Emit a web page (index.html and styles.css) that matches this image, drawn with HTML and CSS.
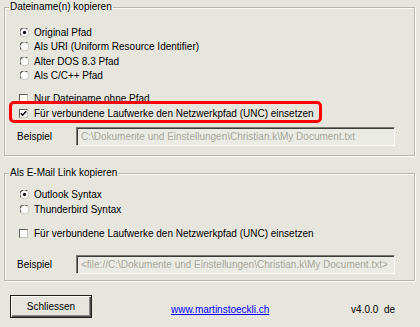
FILE: index.html
```html
<!DOCTYPE html>
<html lang="de">
<head>
<meta charset="utf-8">
<title>Dateiname kopieren</title>
<link rel="stylesheet" href="styles.css">
</head>
<body>
<div class="dialog">
  <fieldset class="group group-file">
    <legend>Dateiname(n) kopieren</legend>
    <div class="radios">
      <div class="row"><span class="radio on"><svg viewBox="0 0 9 9" width="9" height="9"><circle cx="4.5" cy="4.5" r="4" fill="#fff"/><path d="M1.2 7.3A4 4 0 0 1 7.3 1.2" fill="none" stroke="#55554f" stroke-width="1.2"/><path d="M1.6 7.6A4 4 0 0 0 7.6 1.6" fill="none" stroke="#bcbcb4" stroke-width="1"/><circle cx="4.5" cy="4.5" r="1.7" fill="#111"/></svg></span><span>Original Pfad</span></div>
      <div class="row"><span class="radio"><svg viewBox="0 0 9 9" width="9" height="9"><circle cx="4.5" cy="4.5" r="4" fill="#fff"/><path d="M1.2 7.3A4 4 0 0 1 7.3 1.2" fill="none" stroke="#55554f" stroke-width="1.2"/><path d="M1.6 7.6A4 4 0 0 0 7.6 1.6" fill="none" stroke="#bcbcb4" stroke-width="1"/></svg></span><span>Als URI (Uniform Resource Identifier)</span></div>
      <div class="row"><span class="radio"><svg viewBox="0 0 9 9" width="9" height="9"><circle cx="4.5" cy="4.5" r="4" fill="#fff"/><path d="M1.2 7.3A4 4 0 0 1 7.3 1.2" fill="none" stroke="#55554f" stroke-width="1.2"/><path d="M1.6 7.6A4 4 0 0 0 7.6 1.6" fill="none" stroke="#bcbcb4" stroke-width="1"/></svg></span><span>Alter DOS 8.3 Pfad</span></div>
      <div class="row"><span class="radio"><svg viewBox="0 0 9 9" width="9" height="9"><circle cx="4.5" cy="4.5" r="4" fill="#fff"/><path d="M1.2 7.3A4 4 0 0 1 7.3 1.2" fill="none" stroke="#55554f" stroke-width="1.2"/><path d="M1.6 7.6A4 4 0 0 0 7.6 1.6" fill="none" stroke="#bcbcb4" stroke-width="1"/></svg></span><span>Als C/C++ Pfad</span></div>
    </div>
    <div class="row check-row check-first"><span class="check"></span><span>Nur Dateiname ohne Pfad</span></div>
    <div class="row check-row marked"><span class="check"><svg viewBox="0 0 7 7" width="7" height="7"><path d="M0.8 3.2L2.6 5.2L6.2 1.2" fill="none" stroke="#000" stroke-width="1.5"/></svg></span><span>Für verbundene Laufwerke den Netzwerkpfad (UNC) einsetzen</span></div>
    <div class="example example-file">
      <span class="label">Beispiel</span>
      <div class="field">C:\Dokumente und Einstellungen\Christian.k\My Document.txt</div>
    </div>
  </fieldset>

  <fieldset class="group group-mail">
    <legend>Als E-Mail Link kopieren</legend>
    <div class="radios radios-mail">
      <div class="row"><span class="radio on"><svg viewBox="0 0 9 9" width="9" height="9"><circle cx="4.5" cy="4.5" r="4" fill="#fff"/><path d="M1.2 7.3A4 4 0 0 1 7.3 1.2" fill="none" stroke="#55554f" stroke-width="1.2"/><path d="M1.6 7.6A4 4 0 0 0 7.6 1.6" fill="none" stroke="#bcbcb4" stroke-width="1"/><circle cx="4.5" cy="4.5" r="1.7" fill="#111"/></svg></span><span>Outlook Syntax</span></div>
      <div class="row"><span class="radio"><svg viewBox="0 0 9 9" width="9" height="9"><circle cx="4.5" cy="4.5" r="4" fill="#fff"/><path d="M1.2 7.3A4 4 0 0 1 7.3 1.2" fill="none" stroke="#55554f" stroke-width="1.2"/><path d="M1.6 7.6A4 4 0 0 0 7.6 1.6" fill="none" stroke="#bcbcb4" stroke-width="1"/></svg></span><span>Thunderbird Syntax</span></div>
    </div>
    <div class="row check-row check-mail"><span class="check"></span><span>Für verbundene Laufwerke den Netzwerkpfad (UNC) einsetzen</span></div>
    <div class="example example-mail">
      <span class="label">Beispiel</span>
      <div class="field">&lt;file://C:\Dokumente und Einstellungen\Christian.k\My Document.txt&gt;</div>
    </div>
  </fieldset>

  <div class="footer">
    <button class="btn" type="button">Schliessen</button>
    <a class="link" href="#">www.martinstoeckli.ch</a>
    <span class="version">v4.0.0&nbsp; de</span>
  </div>
</div>
</body>
</html>
```

FILE: styles.css
```css
html, body {
  margin: 0;
  padding: 0;
  background: #e6e6de;
}

.dialog {
  width: 420px;
  height: 327px;
  box-sizing: border-box;
  padding: 1px 5px 0 4px;
  font-family: "Liberation Sans", Arial, sans-serif;
  font-size: 10px;
  color: #000;
  display: flex;
  flex-direction: column;
}

.group {
  margin: 0;
  padding: 0;
  border: 1px solid #b8b8aa;
  box-shadow: 1px 1px 0 #fbfbf8, inset 1px 1px 0 #fbfbf8;
  min-width: 0;
}

.group legend {
  padding: 0 1px;
  margin-left: 4px;
  line-height: 12px;
  height: 12px;
}

.group-file {
  height: 155px;
  box-sizing: border-box;
}

.group-mail {
  margin-top: 11px;
  height: 114px;
  box-sizing: border-box;
}

.radios {
  margin-top: 12px;
  padding-left: 15px;
}

.radios .row {
  height: 14.5px;
}

.radios-mail {
  margin-top: 8px;
}

.radios-mail .row {
  height: 15px;
}

.row {
  display: flex;
  align-items: center;
  gap: 5px;
  white-space: nowrap;
  height: 14px;
}

.radio {
  width: 9px;
  height: 9px;
  display: flex;
  flex: none;
}

.check-row {
  padding-left: 14px;
}

.check {
  width: 9px;
  height: 9px;
  box-sizing: border-box;
  background: #fff;
  border-top: 1px solid #5e5e58;
  border-left: 1px solid #5e5e58;
  border-right: 1px solid #c4c4bc;
  border-bottom: 1px solid #c4c4bc;
  display: flex;
  align-items: center;
  justify-content: center;
  flex: none;
  margin-right: 1px;
}

.check-first {
  margin-top: 8px;
}

.marked {
  margin-top: 1px;
  position: relative;
}

.marked::before {
  content: "";
  position: absolute;
  left: 4px;
  top: -5px;
  width: 313px;
  height: 22px;
  box-sizing: border-box;
  border: 3px solid #ff0000;
  border-radius: 5px;
  pointer-events: none;
}

.check-mail {
  margin-top: 9px;
}

.example {
  display: flex;
  align-items: center;
  padding-left: 12px;
}

.example-file {
  margin-top: 7px;
}

.example-mail {
  margin-top: 15px;
}

.label {
  width: 59px;
  flex: none;
}

.field {
  width: 319px;
  height: 19px;
  box-sizing: border-box;
  border-top: 1px solid #7a7a72;
  border-left: 1px solid #7a7a72;
  border-right: 1px solid #fbfbf8;
  border-bottom: 1px solid #fbfbf8;
  box-shadow: inset 1px 1px 0 #3c3c38;
  background: #ebebe5;
  color: #a7a79c;
  padding: 0 0 0 4px;
  line-height: 17px;
  white-space: nowrap;
  overflow: hidden;
}

.footer {
  display: flex;
  align-items: center;
  margin-top: 14px;
  padding-left: 6px;
}

.btn {
  width: 82px;
  height: 23px;
  margin: 0;
  padding: 0;
  font: inherit;
  color: #000;
  background: #e6e6de;
  border: 1px solid #1e1e1c;
  box-shadow: inset 1px 1px 0 #fbfbf8, inset -1px -1px 0 #505050, inset -2px -2px 0 #8a8a84;
  flex: none;
}

.link {
  margin-left: 79px;
  margin-top: 5px;
  color: #0000ff;
  text-decoration: underline;
}

.version {
  margin-left: auto;
  margin-right: 20px;
  margin-top: 5px;
}
```
